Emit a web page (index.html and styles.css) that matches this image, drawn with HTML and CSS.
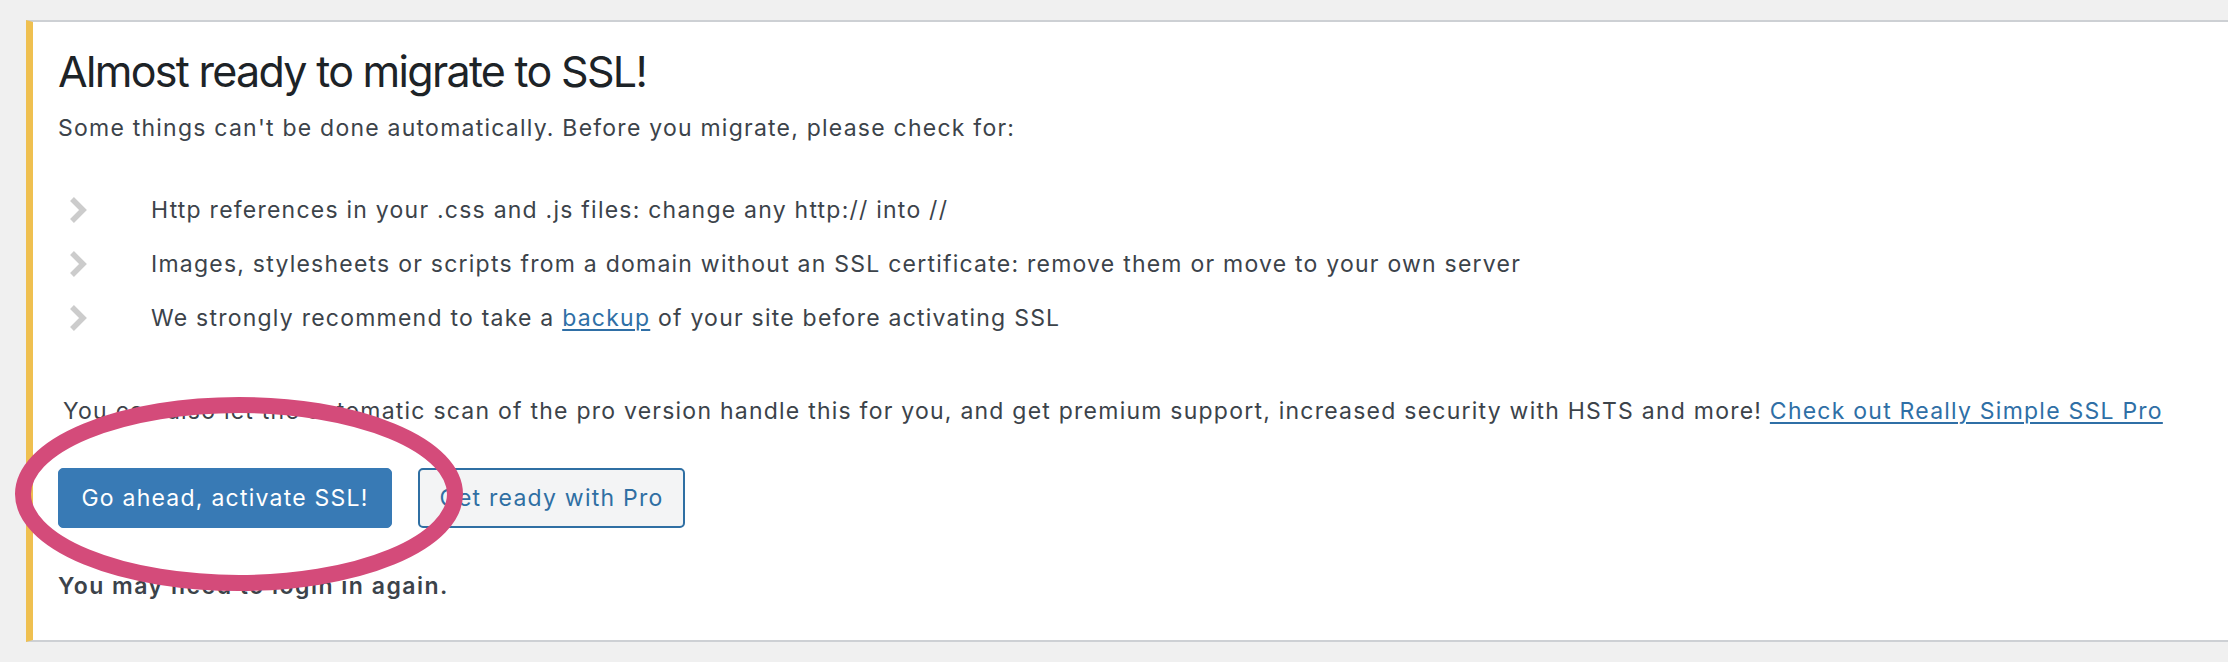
FILE: index.html
```html
<!DOCTYPE html>
<html lang="en">
<head>
<meta charset="utf-8">
<title>Almost ready to migrate to SSL!</title>
<link rel="stylesheet" href="styles.css">
</head>
<body>
<div class="notice">
  <h1 class="title">Almost ready to migrate to SSL!</h1>
  <p class="intro">Some things can't be done automatically. Before you migrate, please check for:</p>
  <ul class="checks">
    <li class="check">
      <svg class="chev" viewBox="0 0 20 28" aria-hidden="true"><polyline points="4,3 15,14 4,25"/></svg>
      <span>Http references in your .css and .js files: change any http:// into //</span>
    </li>
    <li class="check">
      <svg class="chev" viewBox="0 0 20 28" aria-hidden="true"><polyline points="4,3 15,14 4,25"/></svg>
      <span>Images, stylesheets or scripts from a domain without an SSL certificate: remove them or move to your own server</span>
    </li>
    <li class="check">
      <svg class="chev" viewBox="0 0 20 28" aria-hidden="true"><polyline points="4,3 15,14 4,25"/></svg>
      <span>We strongly recommend to take a <a href="#">backup</a> of your site before activating SSL</span>
    </li>
  </ul>
  <p class="pro">You can also let the automatic scan of the pro version handle this for you, and get premium support, increased security with HSTS and more! <a href="#">Check out Really Simple SSL Pro</a></p>
  <div class="actions">
    <button class="btn btn-primary">Go ahead, activate SSL!</button>
    <button class="btn btn-secondary">Get ready with Pro</button>
  </div>
  <p class="note">You may need to login in again.</p>
  <svg class="circle" viewBox="0 0 448 194" aria-hidden="true"><ellipse cx="224" cy="97" rx="216" ry="89"/></svg>
</div>
</body>
</html>
```

FILE: styles.css
```css
html, body {
  margin: 0;
  padding: 0;
}
body {
  background: #f0f0f0;
  font-family: Inter, "Noto Sans", "Liberation Sans", sans-serif;
  color: #3c434a;
  overflow: hidden;
  height: 662px;
}
.notice {
  position: relative;
  margin: 20px 0 0 26px;
  background: #fff;
  border-top: 2px solid #cdd0d4;
  border-bottom: 2px solid #cdd0d4;
  border-left: 7px solid #efc050;
  padding: 22px 0 39px 25px;
  height: 557px;
}
.title {
  margin: 0;
  font-size: 43px;
  line-height: 54px;
  font-weight: 400;
  letter-spacing: -1.7px;
  color: #1d2327;
}
.intro,
.check,
.pro,
.note,
.btn {
  font-size: 23px;
  letter-spacing: 1.23px;
}
.intro {
  margin: 15px 0 0;
  line-height: 30px;
}
.checks {
  list-style: none;
  margin: 40px 0 0;
  padding: 0;
}
.check {
  display: flex;
  align-items: center;
  height: 54px;
}
.chev {
  width: 20px;
  height: 28px;
  margin: 0 63px 0 10px;
  fill: none;
  stroke: #cccccc;
  stroke-width: 5.5;
}
a {
  color: #2f6fa6;
  text-decoration: underline;
  text-underline-offset: 3px;
  text-decoration-thickness: 2px;
}
.pro {
  margin: 51px 0 0 5px;
  line-height: 30px;
}
.actions {
  display: flex;
  gap: 26px;
  margin-top: 42px;
}
.btn {
  height: 60px;
  box-sizing: border-box;
  border-radius: 5px;
  font-family: inherit;
  padding: 0;
}
.btn-primary {
  background: #387ab5;
  border: 1px solid #387ab5;
  color: #fff;
  width: 334px;
}
.btn-secondary {
  background: #f3f4f5;
  border: 2px solid #2f6fa3;
  color: #2f6fa3;
  width: 267px;
}
.note {
  margin: 43px 0 0;
  line-height: 30px;
  font-weight: 600;
  letter-spacing: 1.5px;
}
.circle {
  position: absolute;
  left: -18px;
  top: 375px;
  width: 448px;
  height: 194px;
  fill: none;
  stroke: #d44b7a;
  stroke-width: 16;
}
```
